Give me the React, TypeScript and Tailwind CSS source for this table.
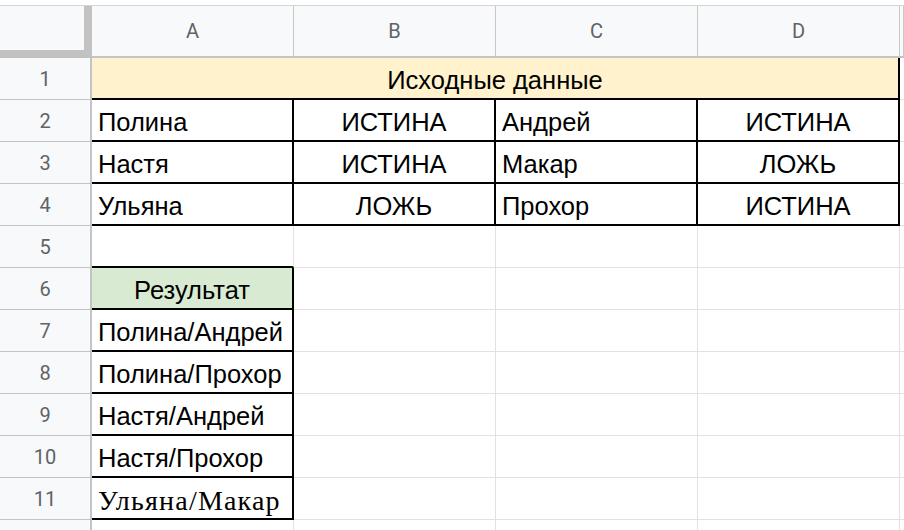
import React from "react";

interface CellProps {
    className: string;
    children?: React.ReactNode;
}

// plain body cell, text sits at the bottom like in Sheets
function Cell({ className, children }: CellProps) {
    return (
        <div className={`h-[42px] flex items-end pb-[3px] text-[25.5px] leading-[29px] text-black whitespace-nowrap overflow-hidden ${className}`}>
            {children}
        </div>
    );
}

function RowHead({ n }: { n?: number }) {
    return (
        <div className="h-[42px] flex items-center justify-center bg-[#f8f9fa] border-r-2 border-r-[#c4c4c4] border-b border-b-[#c4c4c4] font-['Roboto',sans-serif] text-[20px] text-[#5f6368]">
            {n}
        </div>
    );
}

const gray = "border-r border-b border-r-[#e2e2e3] border-b-[#e2e2e3]";
const boxed = "border-r-2 border-b-2 border-r-black border-b-black";
const edge = "border-b border-b-[#e2e2e3]";

const pairs = [
    { name: "Полина", val: "ИСТИНА", name2: "Андрей", val2: "ИСТИНА" },
    { name: "Настя", val: "ИСТИНА", name2: "Макар", val2: "ЛОЖЬ" },
    { name: "Ульяна", val: "ЛОЖЬ", name2: "Прохор", val2: "ИСТИНА" },
];

const results = ["Полина/Андрей", "Полина/Прохор", "Настя/Андрей", "Настя/Прохор"];

export default function App() {
    return (
        <div className="w-[904px] h-[530px] overflow-hidden bg-white pt-[5px] font-['Liberation_Sans',Arial,sans-serif]">
            <div className="grid grid-cols-[92px_202px_202px_202px_202px_1fr] border-t border-t-[#d6d6d6]">
                {/* column headers */}
                <div className="h-[52px] bg-[#f8f9fa] border-r-[8px] border-b-[8px] border-r-[#c2c2c2] border-b-[#c2c2c2]" />
                {["A", "B", "C", "D", ""].map((c, i) => (
                    <div
                        key={i}
                        className="h-[52px] flex items-center justify-center bg-[#f8f9fa] border-r border-r-[#c7c7c7] border-b-2 border-b-[#c4c4c4] font-['Roboto',sans-serif] text-[20px] text-[#5f6368]"
                    >
                        {c}
                    </div>
                ))}

                {/* row 1 - merged title */}
                <RowHead n={1} />
                <Cell className={`col-span-4 justify-center bg-[#fff2cc] ${boxed}`}>Исходные данные</Cell>
                <Cell className={edge} />

                {/* rows 2-4 */}
                {pairs.map((p, i) => (
                    <React.Fragment key={i}>
                        <RowHead n={i + 2} />
                        <Cell className={`pl-[6px] ${boxed}`}>{p.name}</Cell>
                        <Cell className={`justify-center ${boxed}`}>{p.val}</Cell>
                        <Cell className={`pl-[6px] ${boxed}`}>{p.name2}</Cell>
                        <Cell className={`justify-center ${boxed}`}>{p.val2}</Cell>
                        <Cell className={edge} />
                    </React.Fragment>
                ))}

                {/* row 5 - empty */}
                <RowHead n={5} />
                <Cell className="border-r border-b-2 border-r-[#e2e2e3] border-b-black" />
                <Cell className={gray} />
                <Cell className={gray} />
                <Cell className={gray} />
                <Cell className={edge} />

                {/* row 6 - result title */}
                <RowHead n={6} />
                <Cell className={`justify-center bg-[#d9ead3] ${boxed}`}>Результат</Cell>
                <Cell className={gray} />
                <Cell className={gray} />
                <Cell className={gray} />
                <Cell className={edge} />

                {results.map((r, i) => (
                    <React.Fragment key={r}>
                        <RowHead n={i + 7} />
                        <Cell className={`pl-[6px] ${boxed}`}>{r}</Cell>
                        <Cell className={gray} />
                        <Cell className={gray} />
                        <Cell className={gray} />
                        <Cell className={edge} />
                    </React.Fragment>
                ))}

                {/* row 11 is typed in a serif font */}
                <RowHead n={11} />
                <Cell className={`pl-[6px] font-['Liberation_Serif',serif] text-[28px] tracking-[1.2px] ${boxed}`}>Ульяна/Макар</Cell>
                <Cell className={gray} />
                <Cell className={gray} />
                <Cell className={gray} />
                <Cell className={edge} />

                {/* next row only peeks in at the bottom */}
                <RowHead />
                <Cell className={gray} />
                <Cell className={gray} />
                <Cell className={gray} />
                <Cell className={gray} />
                <Cell className={edge} />
            </div>
        </div>
    );
}
